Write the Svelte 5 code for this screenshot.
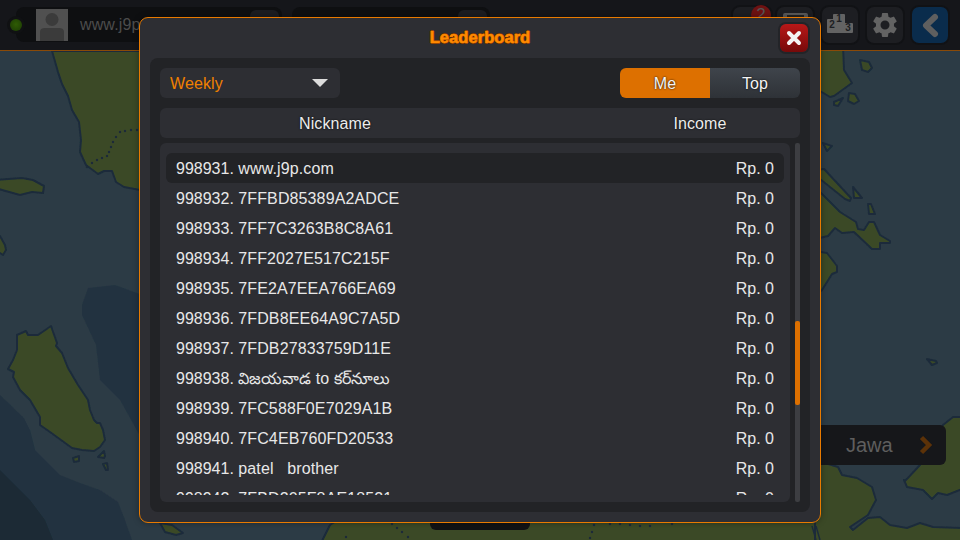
<script>
  const rows = [
    ['998931.', 'www.j9p.com'], ['998932.', '7FFBD85389A2ADCE'], ['998933.', '7FF7C3263B8C8A61'],
    ['998934.', '7FF2027E517C215F'], ['998935.', '7FE2A7EEA766EA69'], ['998936.', '7FDB8EE64A9C7A5D'],
    ['998937.', '7FDB27833759D11E'], ['998938.', 'విజయవాడ to కర్\u200cనూలు', true], ['998939.', '7FC588F0E7029A1B'],
    ['998940.', '7FC4EB760FD20533'], ['998941.', 'patel   brother'], ['998942.', '7FBD205F8AE18521']
  ];
  const lands = [
    '52,51 58,72 62,84 68,96 72,110 79,122 81,140 80,152 86,165 98,174 104,171 112,171 116,182 124,187 140,190 140,51',
    '-5,180 22,178 33,180 44,186 43,193 32,192 20,195 -5,188',
    '-5,235 0,236 5,245 6,250 3,255 0,253 -5,252',
    '17,335 26,331 28,335 38,335 51,326 57,343 56,346 62,353 68,368 78,385 88,400 90,410 94,420 97,423 100,423 103,430 105,440 100,447 94,451 82,450 72,448 50,432 40,425 40,417 30,400 20,390 13,377 14,372 8,369 13,360 17,350',
    '73,458 79,456 79,461 74,462', '98,457 104,451 105,456 104,458', '103,464 107,463 108,470 106,470',
    '160,523 172,525 183,533 176,535 165,532',
    '320,545 330,525 345,515 820,515 820,545',
    '815,45 843,45 844,70 852,83 834,96 830,97 815,88',
    '860,60 869,62 872,68 868,72 862,70', '849,93 855,94 859,101 854,104 848,101', '834,102 843,98 838,106 834,105',
    '823,143 832,146 827,151', '815,170 824,169 851,198 850,201 845,199 815,175', '853,187 862,198 854,198', '868,204 871,204 875,214 869,214',
    '815,192 820,192 840,212 856,222 858,229 864,230 869,222 874,222 880,235 890,241 890,243 880,243 880,249 872,249 854,232 842,233 835,228 828,236 815,239',
    '815,251 827,253 837,266 837,272 832,274 822,290 815,296',
    '927,359 936,361 937,363 932,365',
    '815,460 838,467 842,475 857,478 872,487 876,500 868,515 850,527 853,530 868,518 880,517 890,525 907,528 920,523 933,527 965,528 965,545 815,545',
    '905,481 920,465 943,425 953,417 965,417 965,488 947,495 938,493 932,499 923,490 907,487 904,480'
  ];
  const dots = [
    [87,167],[92,163],[97,160],[102,158],[107,156],[109,152],[111,147],[113,142],[116,137],[120,132],[125,131],[131,130],[137,130],
    [346,537],[392,524],[397,528],[402,532],[408,537],[590,538],[592,532],[594,525],[610,524],[620,524],[630,525],[640,526],[650,526],[672,524]
  ];
</script>

<div class="screen">
  <svg class="map" viewBox="0 0 960 540" width="960" height="540" aria-hidden="true">
    <defs>
      <filter id="soft" x="-5%" y="-5%" width="110%" height="110%"><feGaussianBlur stdDeviation="0.5" /></filter>
    </defs>
    <rect width="960" height="540" fill="#2c3b45" />
    <g filter="url(#soft)">
      <polygon fill="#223340" points="88,288 115,285 145,296 145,445 120,400 100,380 96,345 82,315 82,305" />
      <polygon fill="#223340" points="0,395 24,418 30,430 35,450 60,475 80,483 100,490 118,502 125,520 132,540 0,540" />
      <polygon fill="#1a2a35" points="0,470 30,500 45,520 53,540 0,540" />
      {#each lands as points}
        <polygon {points} fill="#3b4a28" stroke="#1b2c3a" stroke-width="2" stroke-linejoin="round" />
      {/each}
      {#each dots as d}
        <circle cx={d[0]} cy={d[1]} r="1.2" fill="#1b2c3a" />
      {/each}
      <path d="M816 526 L820 540 M812 526 L816 540" stroke="#1b2c3a" stroke-width="1.5" />
    </g>
  </svg>

  <header class="bar">
    <div class="status"></div>
    <div class="pill first">
      <div class="avatar">
        <svg viewBox="0 0 32 32" width="32" height="32"><circle cx="16" cy="10.5" r="6.5" fill="#3b3b3b" /><path d="M4 32 V23 Q4 19 9 19 H23 Q28 19 28 23 V32Z" fill="#3b3b3b" /></svg>
      </div>
      <span class="name">www.j9p.com</span>
      <span class="tab"></span>
    </div>
    <div class="pill second"><span class="tab"></span></div>
    <div class="spacer"></div>
    <div class="tools">
      <div class="tool wide">
        <svg viewBox="0 0 38 36" width="38" height="36"><path d="M7 11 Q10 9 12 12 L24 14 L12 15 Q9 17 7 15Z" fill="#5a5a5a" /></svg>
        <span class="badge">2</span>
      </div>
      <div class="tool"><svg viewBox="0 0 36 36" width="36" height="36"><rect x="6" y="6" width="25" height="20" rx="2" fill="#5a5a5a" /><rect x="10" y="8" width="17" height="3" fill="#222" /></svg></div>
      <div class="tool">
        <svg viewBox="0 0 36 36" width="36" height="36"><path d="M5 13 Q5 12 6 12 H11 V8 Q11 7 12 7 H22 Q23 7 23 8 V16 H30 Q31 16 31 17 V25 Q31 26 30 26 H6 Q5 26 5 25Z" fill="#636363" /><text x="17" y="15" class="podium">1</text><text x="10" y="21" class="podium">2</text><text x="26" y="24" class="podium">3</text></svg>
      </div>
      <div class="tool">
        <svg viewBox="0 0 24 24" width="30" height="30"><path fill="#636363" d="M19.14 12.94c.04-.3.06-.61.06-.94s-.02-.64-.07-.94l2.03-1.58a.5.5 0 0 0 .12-.63l-1.92-3.32a.5.5 0 0 0-.6-.22l-2.39.96a7 7 0 0 0-1.62-.94l-.36-2.54a.5.5 0 0 0-.48-.41h-3.84a.5.5 0 0 0-.47.41l-.36 2.54c-.59.24-1.13.57-1.62.94l-2.39-.96a.5.5 0 0 0-.59.22L2.72 8.85a.5.5 0 0 0 .12.63l2.03 1.58c-.05.3-.09.63-.09.94s.02.64.07.94l-2.03 1.58a.5.5 0 0 0-.12.63l1.92 3.32c.12.22.37.29.59.22l2.39-.96c.5.38 1.03.7 1.62.94l.36 2.54c.05.24.24.41.48.41h3.84c.24 0 .44-.17.47-.41l.36-2.54c.59-.24 1.13-.56 1.62-.94l2.39.96c.22.08.47 0 .59-.22l1.92-3.32a.5.5 0 0 0-.12-.63zM12 15.6a3.6 3.6 0 1 1 0-7.2 3.6 3.6 0 0 1 0 7.2z"/></svg>
      </div>
      <div class="tool back">
        <svg viewBox="0 0 36 36" width="36" height="36"><path d="M23 10 L14 18.5 L23 27" fill="none" stroke="#5f5f5f" stroke-width="6" stroke-linecap="round" stroke-linejoin="round" /></svg>
      </div>
    </div>
  </header>

  <div class="under"></div>

  <div class="jawa">
    <span>Jawa</span>
    <svg viewBox="0 0 14 20" width="14" height="20"><path d="M2.5 2.5 L10 10 L2.5 17.5" fill="none" stroke="#5c3208" stroke-width="4.5" /></svg>
  </div>

  <section class="modal">
    <div class="head">
      <h1>Leaderboard</h1>
      <button class="close" aria-label="Close">
        <svg viewBox="0 0 16 16" width="16" height="16"><path d="M3 3 L13 13 M13 3 L3 13" stroke="#f4f4f4" stroke-width="4" stroke-linecap="round" /></svg>
      </button>
    </div>
    <div class="panel">
      <div class="controls">
        <div class="select">
          <span>Weekly</span>
          <svg viewBox="0 0 16 8" width="16" height="8"><path d="M0 0 H16 L8 8Z" fill="#dcdcdc" /></svg>
        </div>
        <div class="toggle">
          <span class="on">Me</span>
          <span class="off">Top</span>
        </div>
      </div>
      <div class="columns">
        <span class="col-name">Nickname</span>
        <span class="col-income">Income</span>
      </div>
      <div class="body">
        <div class="list">
          <div class="clip">
            {#each rows as row, i}
              <div class="row" class:me={i === 0}>
                <span class="who">{row[0]} <span class="nick" class:plain={row[2]}>{row[1]}</span></span>
                <span>Rp. 0</span>
              </div>
            {/each}
          </div>
        </div>
        <div class="track"><div class="thumb"></div></div>
      </div>
    </div>
  </section>
</div>

<style>
  :global(body) {
    margin: 0;
    background: #2c3b45;
  }
  .screen {
    position: relative;
    width: 960px;
    height: 540px;
    overflow: hidden;
    font-family: "Liberation Sans", "Noto Sans", sans-serif;
    font-size: 16px;
    line-height: 18px;
  }
  .map {
    position: absolute;
    inset: 0;
  }
  .bar {
    position: relative;
    height: 51px;
    box-sizing: border-box;
    display: flex;
    align-items: center;
    padding: 0 12px 1px 10px;
    background: #15161a;
    border-bottom: 1px solid #8a4a08;
  }
  .status {
    position: relative;
    z-index: 1;
    width: 12px;
    height: 12px;
    border-radius: 50%;
    background: radial-gradient(circle at 50% 45%, #2f5c04, #1b3a04);
    box-shadow: 0 0 0 3px #101113;
    margin-right: -6px;
    flex: none;
  }
  .pill {
    height: 35px;
    background: #0e0f11;
    border-radius: 8px;
    display: flex;
    align-items: center;
    position: relative;
  }
  .first {
    width: 266px;
    padding-left: 20px;
    box-sizing: border-box;
    gap: 12px;
  }
  .second {
    width: 198px;
    margin-left: 10px;
  }
  .avatar {
    width: 32px;
    height: 32px;
    background: #505050;
    overflow: hidden;
  }
  .avatar svg {
    display: block;
  }
  .name {
    color: #4c4c4c;
    letter-spacing: 0.12px;
  }
  .tab {
    position: absolute;
    top: 3px;
    right: 3px;
    width: 29px;
    height: 29px;
    background: #1c1d21;
    border-radius: 6px;
  }
  .spacer {
    flex: 1;
  }
  .tools {
    display: flex;
    gap: 9px;
  }
  .tool {
    position: relative;
    width: 36px;
    height: 36px;
    border-radius: 7px;
    background: #1d1e22;
    box-shadow: 0 0 0 2px #111215;
    display: flex;
    align-items: center;
    justify-content: center;
  }
  .tool.wide {
    width: 38px;
    margin-right: -3px;
  }
  .back {
    background: #0a2c4c;
  }
  .badge {
    position: absolute;
    top: -2px;
    left: 18px;
    width: 20px;
    height: 20px;
    border-radius: 50%;
    background: #6e1212;
    color: #555;
    font-size: 17px;
    text-align: center;
    line-height: 20px;
  }
  .podium {
    font: bold 10px "Liberation Sans", sans-serif;
    fill: #1d1e22;
    text-anchor: middle;
  }
  .under {
    position: absolute;
    left: 430px;
    top: 515px;
    width: 100px;
    height: 15px;
    background: #111214;
    border-radius: 6px;
  }
  .jawa {
    position: absolute;
    left: 800px;
    top: 425px;
    width: 146px;
    height: 40px;
    box-sizing: border-box;
    padding: 0 13px 0 46px;
    border-radius: 6px;
    background: #16171a;
    display: flex;
    align-items: center;
    justify-content: space-between;
    color: #5e5e5e;
    font-size: 20px;
  }
  .modal {
    position: absolute;
    left: 139px;
    top: 17px;
    width: 682px;
    height: 506px;
    box-sizing: border-box;
    background: #2d2e33;
    border: 1px solid #e87a00;
    border-radius: 9px;
    padding: 0 10px 10px;
    display: flex;
    flex-direction: column;
    box-shadow: 0 0 6px rgba(0, 0, 0, 0.35);
  }
  .head {
    height: 40px;
    flex: none;
    position: relative;
    display: flex;
    justify-content: center;
    align-items: center;
  }
  h1 {
    margin: 0;
    font-size: 16.6px;
    font-weight: bold;
    color: #ff8a00;
    -webkit-text-stroke: 0.6px #ff8a00;
    text-shadow: -1px 0 #6d2e00, 1px 0 #6d2e00, 0 -1px #6d2e00, 0 1px #6d2e00;
  }
  .close {
    position: absolute;
    right: 2px;
    top: 6px;
    width: 28px;
    height: 28px;
    box-sizing: content-box;
    padding: 0;
    border: 0;
    border-radius: 6px;
    background: linear-gradient(#b81818, #760a0a);
    box-shadow: 0 0 0 2px #232428;
    display: flex;
    align-items: center;
    justify-content: center;
  }
  .panel {
    flex: 1;
    min-height: 0;
    background: #222326;
    border-radius: 8px;
    padding: 10px;
    display: flex;
    flex-direction: column;
  }
  .controls {
    display: flex;
    justify-content: space-between;
    height: 30px;
    flex: none;
    margin-bottom: 10px;
  }
  .select {
    width: 180px;
    box-sizing: border-box;
    background: #2d2e33;
    border-radius: 6px;
    padding: 0 12px 0 10px;
    display: flex;
    align-items: center;
    justify-content: space-between;
    color: #f08000;
    letter-spacing: 0.12px;
  }
  .select span {
    padding-top: 2px;
  }
  .toggle {
    width: 180px;
    display: flex;
    color: #f4f4f4;
    text-shadow: 0 0 2px #000;
    letter-spacing: 0.12px;
  }
  .toggle span {
    flex: 1;
    display: flex;
    align-items: center;
    justify-content: center;
    padding-top: 2px;
  }
  .on {
    background: #dd7000;
    border-radius: 6px 0 0 6px;
  }
  .off {
    background: linear-gradient(#3f444b, #2e3237);
    border-radius: 0 6px 6px 0;
  }
  .columns {
    height: 30px;
    flex: none;
    box-sizing: border-box;
    padding-top: 2px;
    background: #2d2e33;
    border-radius: 6px;
    display: flex;
    align-items: center;
    color: #ececec;
    text-shadow: 0 0 2px #000;
    letter-spacing: 0.12px;
    margin-bottom: 5px;
  }
  .col-name {
    width: 350px;
    text-align: center;
  }
  .col-income {
    width: 190px;
    margin-left: 95px;
    text-align: center;
  }
  .body {
    flex: 1;
    min-height: 0;
    display: flex;
    gap: 5px;
  }
  .list {
    flex: 1;
    box-sizing: border-box;
    background: #2d2e33;
    border-radius: 6px;
    padding: 10px 6px 7px;
    min-height: 0;
  }
  .clip {
    height: 100%;
    overflow: hidden;
  }
  .row {
    height: 30px;
    box-sizing: border-box;
    padding: 2px 10px 0;
    display: flex;
    align-items: center;
    justify-content: space-between;
    color: #e8e8e8;
    border-radius: 6px;
  }
  .who {
    white-space: pre;
  }
  .nick {
    letter-spacing: 0.12px;
  }
  .plain {
    letter-spacing: 0;
  }
  .me {
    background: #222326;
  }
  .track {
    width: 5px;
    background: #3d3e42;
    border-radius: 2px;
    padding-top: 178px;
    box-sizing: border-box;
  }
  .thumb {
    height: 84px;
    background: #dd7000;
    border-radius: 2px;
  }
</style>
